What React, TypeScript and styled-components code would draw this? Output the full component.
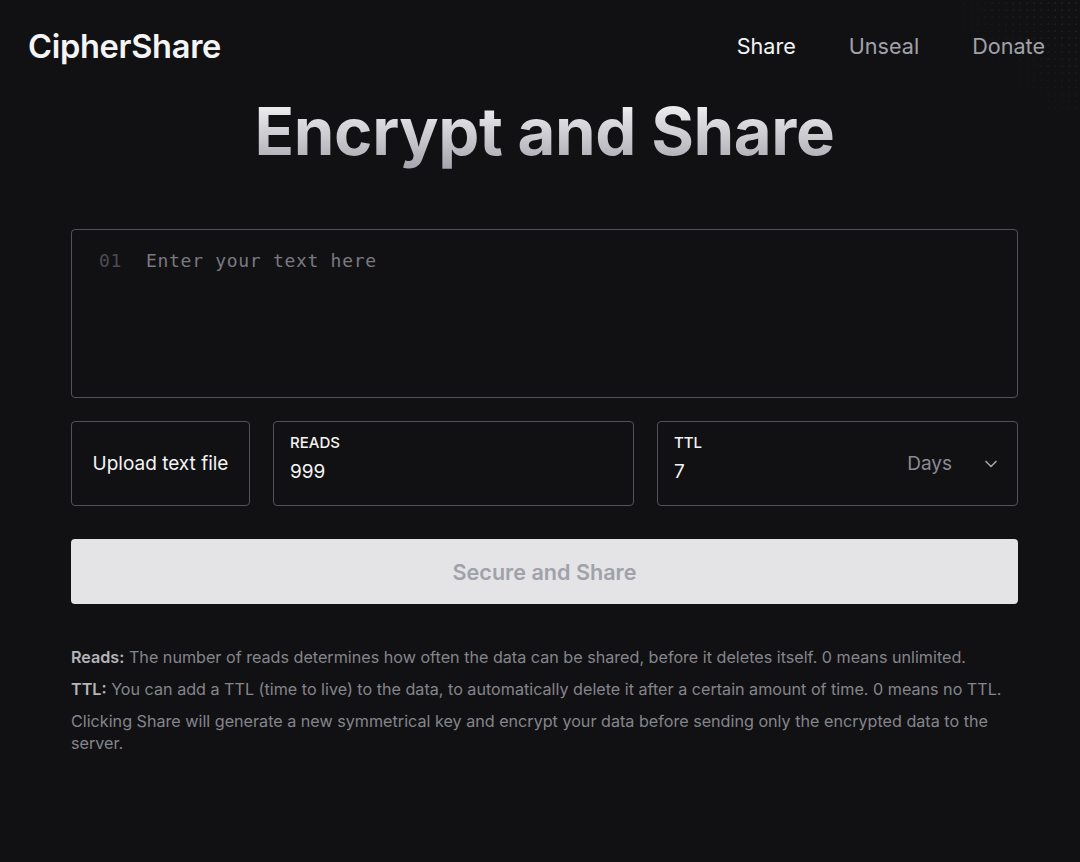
import React from "react";
import styled, { createGlobalStyle } from "styled-components";

const Global = createGlobalStyle`
  html, body { margin: 0; padding: 0; background: #111113; }
  body { font-family: Inter, "Noto Sans", sans-serif; color: #f4f4f5; }
  * { box-sizing: border-box; }
`;

const Page = styled.div`
  min-height: 862px;
  background: #111113;
  position: relative;
  overflow: hidden;
`;

const Dots = styled.div`
  position: absolute;
  top: 0;
  right: 0;
  width: 140px;
  height: 110px;
  background-image: radial-gradient(rgba(255,255,255,0.09) 1px, transparent 1px);
  background-size: 7px 7px;
  mask-image: linear-gradient(225deg, rgba(0,0,0,0.8), transparent 70%);
  -webkit-mask-image: linear-gradient(225deg, rgba(0,0,0,0.8), transparent 70%);
  pointer-events: none;
`;

const Header = styled.header`
  display: flex;
  justify-content: space-between;
  align-items: flex-start;
  padding: 25px 35px 0 28px;
  height: 92px;
`;

const Logo = styled.div`
  font-size: 32.6px;
  font-weight: 600;
  letter-spacing: -0.3px;
  color: #f4f4f5;
  line-height: 42px;
`;

const Nav = styled.nav`
  display: flex;
  gap: 53px;
  padding-top: 6px;
`;

const NavLink = styled.a<{ $active?: boolean }>`
  font-size: 21.6px;
  line-height: 30px;
  color: ${p => (p.$active ? "#f4f4f5" : "#a1a1aa")};
  text-decoration: none;
`;

const Main = styled.main`
  width: 947px;
  margin: 0 0 0 71px;
  display: flex;
  flex-direction: column;
`;

const Title = styled.h1`
  margin: 0 0 57px;
  text-align: center;
  font-size: 65.3px;
  font-weight: 700;
  letter-spacing: -0.4px;
  line-height: 80px;
  background: linear-gradient(180deg, #f4f4f5 10%, #a1a1aa 100%);
  -webkit-background-clip: text;
  background-clip: text;
  color: transparent;
`;

const Editor = styled.div`
  height: 169px;
  border: 1px solid #52525b;
  border-radius: 4px;
  display: flex;
  padding: 19px 0 0 27px;
  font-family: "DejaVu Sans Mono", "Liberation Mono", monospace;
  font-size: 18px;
  letter-spacing: 0.7px;
  line-height: 24px;
`;

const LineNo = styled.span`
  color: #4b4b52;
  width: 47px;
`;

const Placeholder = styled.span`
  color: #7a7a82;
`;

const Row = styled.div`
  display: flex;
  gap: 23px;
  margin-top: 23px;
  height: 85px;
`;

const Box = styled.div`
  border: 1px solid #52525b;
  border-radius: 4px;
`;

const UploadButton = styled(Box)`
  width: 179px;
  display: flex;
  align-items: center;
  justify-content: center;
  font-size: 19px;
  color: #f4f4f5;
`;

const Field = styled(Box)`
  flex: 1;
  display: flex;
  align-items: center;
  padding: 0 16px;
`;

const FieldText = styled.div`
  flex: 1;
  display: flex;
  flex-direction: column;
  gap: 8px;
  margin-top: -12px;
`;

const Label = styled.span`
  font-size: 15px;
  font-weight: 500;
  color: #f4f4f5;
  line-height: 20px;
`;

const Value = styled.span`
  font-size: 19px;
  color: #f4f4f5;
  line-height: 22px;
`;

const Unit = styled.span`
  font-size: 19px;
  color: #8b8b93;
  margin-right: 29px;
`;

const Submit = styled.button`
  margin-top: 33px;
  height: 65px;
  border: none;
  border-radius: 4px;
  background: #e4e4e7;
  color: #a1a1aa;
  font-family: Inter, sans-serif;
  font-size: 21.6px;
  font-weight: 600;
`;

const Notes = styled.div`
  margin-top: 42px;
  display: flex;
  flex-direction: column;
  gap: 10px;
  font-size: 16.15px;
  line-height: 22px;
  color: #85858c;
`;

const Note = styled.p`
  margin: 0;
`;

const Strong = styled.b`
  color: #b4b4ba;
  font-weight: 600;
`;

export default function App() {
  return (
    <Page>
      <Global />
      <Dots />
      <Header>
        <Logo>CipherShare</Logo>
        <Nav>
          <NavLink $active>Share</NavLink>
          <NavLink>Unseal</NavLink>
          <NavLink>Donate</NavLink>
        </Nav>
      </Header>
      <Main>
        <Title>Encrypt and Share</Title>
        <Editor>
          <LineNo>01</LineNo>
          <Placeholder>Enter your text here</Placeholder>
        </Editor>
        <Row>
          <UploadButton>Upload text file</UploadButton>
          <Field>
            <FieldText>
              <Label>READS</Label>
              <Value>999</Value>
            </FieldText>
          </Field>
          <Field>
            <FieldText>
              <Label>TTL</Label>
              <Value>7</Value>
            </FieldText>
            <Unit>Days</Unit>
            <svg width="20" height="20" viewBox="0 0 24 24" fill="none" stroke="#a1a1aa" strokeWidth="2" strokeLinecap="round" strokeLinejoin="round">
              <path d="m6 9 6 6 6-6" />
            </svg>
          </Field>
        </Row>
        <Submit>Secure and Share</Submit>
        <Notes>
          <Note><Strong>Reads:</Strong> The number of reads determines how often the data can be shared, before it deletes itself. 0 means unlimited.</Note>
          <Note><Strong>TTL:</Strong> You can add a TTL (time to live) to the data, to automatically delete it after a certain amount of time. 0 means no TTL.</Note>
          <Note>Clicking Share will generate a new symmetrical key and encrypt your data before sending only the encrypted data to the server.</Note>
        </Notes>
      </Main>
    </Page>
  );
}
